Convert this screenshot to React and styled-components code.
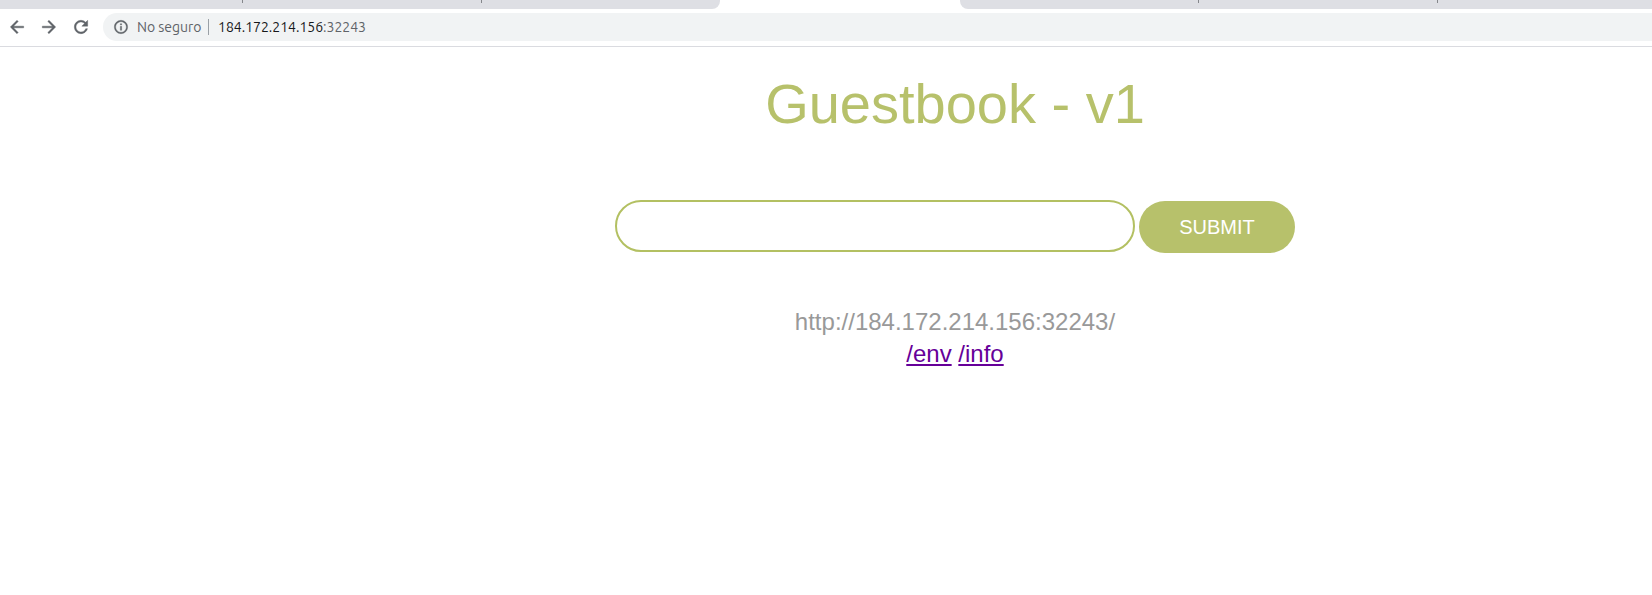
import React from "react";
import styled, { createGlobalStyle } from "styled-components";

const GlobalStyle = createGlobalStyle`
  * { box-sizing: border-box; }
  body { margin: 0; background: #fff; overflow: hidden; }
`;

const Window = styled.div`
  width: 100%;
  height: 595px;
  display: flex;
  flex-direction: column;
  background: #fff;
`;

const TabStrip = styled.div`
  height: 9px;
  flex: none;
  display: flex;
  justify-content: space-between;
`;

const TabGroup = styled.div`
  width: ${(p) => p.$width}px;
  height: 9px;
  display: flex;
  background: #dedfe4;
  border-radius: ${(p) => (p.$side === "left" ? "0 0 8px 0" : "0 0 0 8px")};
`;

const Tab = styled.div`
  width: ${(p) => p.$width}px;
  height: 3px;
  border-right: 1px solid #85878b;
`;

const Toolbar = styled.div`
  height: 38px;
  flex: none;
  display: flex;
  align-items: flex-start;
  padding: 4px 0 0 7px;
  border-bottom: 1px solid #dadbe0;
`;

const NavButton = styled.button`
  width: 20px;
  height: 28px;
  margin: 0 12px 0 0;
  padding: 0;
  border: 0;
  background: none;
  display: flex;
  align-items: center;
  justify-content: center;
`;

const Omnibox = styled.div`
  flex: 1;
  height: 28px;
  display: flex;
  align-items: center;
  padding-left: 10px;
  border-radius: 14px 0 0 14px;
  background: #f1f3f4;
  font: 14px/28px "Ubuntu", "Noto Sans", sans-serif;
  color: #5f6368;
  white-space: nowrap;
`;

const Security = styled.span`
  width: 72px;
  height: 16px;
  line-height: 16px;
  margin-left: 8px;
  border-right: 1px solid #9aa0a6;
  letter-spacing: -0.05px;
`;

const Address = styled.span`
  margin-left: 9px;
`;

const Host = styled.span`
  color: #17181a;
`;

const Page = styled.main`
  width: 680px;
  margin-left: 615px;
  display: flex;
  flex-direction: column;
  align-items: center;
  font-family: "Liberation Sans", Arial, sans-serif;
`;

const Title = styled.h1`
  margin: 25px 0 0;
  font-size: 56px;
  line-height: 64px;
  font-weight: 400;
  color: #b7c16b;
`;

const Form = styled.form`
  width: 680px;
  margin-top: 64px;
  display: flex;
  gap: 4px;
`;

const Entry = styled.input`
  width: 520px;
  height: 52px;
  padding: 0 24px;
  border: 2px solid #b3c062;
  border-radius: 26px;
  outline: none;
  font: 24px "Liberation Sans", Arial, sans-serif;
`;

const Submit = styled.button`
  width: 156px;
  height: 52px;
  margin-top: 1px;
  padding: 0;
  border: 0;
  border-radius: 26px;
  background: #b7c16b;
  color: #fff;
  font: 20px "Liberation Sans", Arial, sans-serif;
`;

const Details = styled.div`
  margin-top: 53px;
  text-align: center;
  font-size: 24px;
  line-height: 32px;
  color: #999;
`;

const Link = styled.a`
  color: #660099;
  text-decoration: underline;
`;

const IconSvg = styled.svg`
  flex: none;
  fill: #5f6368;
  stroke: #5f6368;
  stroke-width: 0.5;
`;

const Icon = ({ path, size = 20 }) => (
  <IconSvg width={size} height={size} viewBox="0 0 24 24">
    <path d={path} />
  </IconSvg>
);

const BACK = "M20 11H7.83l5.59-5.59L12 4l-8 8 8 8 1.41-1.41L7.83 13H20v-2z";
const FORWARD = "M12 4l-1.41 1.41L16.17 11H4v2h12.17l-5.58 5.59L12 20l8-8z";
const RELOAD =
  "M17.65 6.35C16.2 4.9 14.21 4 12 4c-4.42 0-7.99 3.58-7.99 8s3.57 8 7.99 8c3.73 0 6.84-2.55 7.73-6h-2.08c-.82 2.33-3.04 4-5.65 4-3.31 0-6-2.69-6-6s2.69-6 6-6c1.66 0 3.14.69 4.22 1.78L13 11h7V4l-2.35 2.35z";
const INFO =
  "M11 7h2v2h-2zm0 4h2v6h-2zm1-9C6.48 2 2 6.48 2 12s4.48 10 10 10 10-4.48 10-10S17.52 2 12 2zm0 18c-4.41 0-8-3.59-8-8s3.59-8 8-8 8 3.59 8 8-3.59 8-8 8z";

export default function App() {
  return (
    <Window>
      <GlobalStyle />
      <TabStrip>
        <TabGroup $width={720} $side="left">
          <Tab $width={243} />
          <Tab $width={239} />
        </TabGroup>
        <TabGroup $width={692} $side="right">
          <Tab $width={239} />
          <Tab $width={239} />
        </TabGroup>
      </TabStrip>
      <Toolbar>
        <NavButton aria-label="Back"><Icon path={BACK} /></NavButton>
        <NavButton aria-label="Forward"><Icon path={FORWARD} /></NavButton>
        <NavButton aria-label="Reload"><Icon path={RELOAD} /></NavButton>
        <Omnibox>
          <Icon path={INFO} size={16} />
          <Security>No seguro</Security>
          <Address><Host>184.172.214.156</Host>:32243</Address>
        </Omnibox>
      </Toolbar>
      <Page>
        <Title>Guestbook - v1</Title>
        <Form onSubmit={(e) => e.preventDefault()}>
          <Entry type="text" aria-label="Entry" />
          <Submit type="submit">SUBMIT</Submit>
        </Form>
        <Details>
          <div>http://184.172.214.156:32243/</div>
          <div>
            <Link href="#env">/env</Link> <Link href="#info">/info</Link>
          </div>
        </Details>
      </Page>
    </Window>
  );
}
